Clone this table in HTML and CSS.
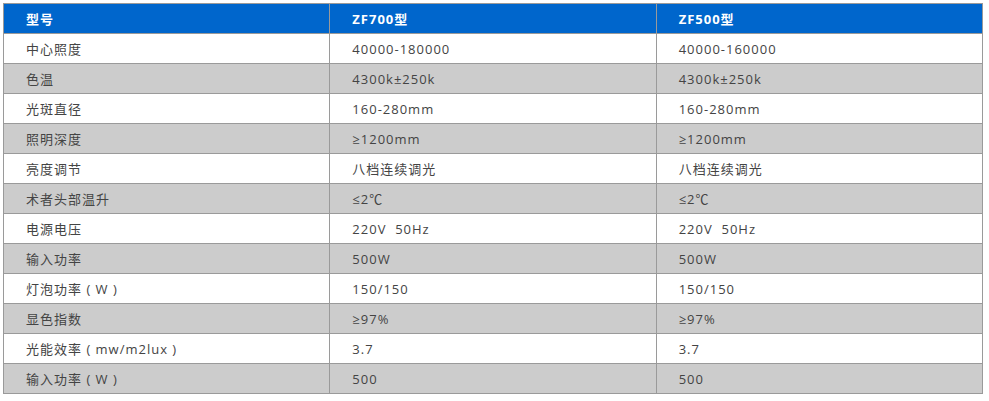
FILE: index.html
```html
<!DOCTYPE html>
<html lang="zh">
<head>
<meta charset="utf-8">
<title>参数</title>
<link rel="stylesheet" href="styles.css">
</head>
<body>
<div class="wrap">
<table class="spec">
  <colgroup><col class="c1"><col class="c2"><col class="c3"></colgroup>
  <thead>
    <tr><th>型号</th><th>ZF700型</th><th>ZF500型</th></tr>
  </thead>
  <tbody>
    <tr><td>中心照度</td><td>40000-180000</td><td>40000-160000</td></tr>
    <tr><td>色温</td><td>4300k±250k</td><td>4300k±250k</td></tr>
    <tr><td>光斑直径</td><td>160-280mm</td><td>160-280mm</td></tr>
    <tr><td>照明深度</td><td>≥1200mm</td><td>≥1200mm</td></tr>
    <tr><td>亮度调节</td><td>八档连续调光</td><td>八档连续调光</td></tr>
    <tr><td>术者头部温升</td><td>≤2℃</td><td>≤2℃</td></tr>
    <tr><td>电源电压</td><td>220V&nbsp;&nbsp;50Hz</td><td>220V&nbsp;&nbsp;50Hz</td></tr>
    <tr><td>输入功率</td><td>500W</td><td>500W</td></tr>
    <tr><td>灯泡功率 ( W )</td><td>150/150</td><td>150/150</td></tr>
    <tr><td>显色指数</td><td>≥97%</td><td>≥97%</td></tr>
    <tr><td>光能效率 ( mw/m2lux )</td><td>3.7</td><td>3.7</td></tr>
    <tr><td>输入功率 ( W )</td><td>500</td><td>500</td></tr>
  </tbody>
</table>
</div>
</body>
</html>
```
FILE: styles.css
```css
html, body {
  margin: 0;
  padding: 0;
  background: #ffffff;
}
.wrap {
  padding: 3px;
}
.spec {
  border-collapse: collapse;
  width: 980px;
  table-layout: fixed;
  font-family: "Open Sans", "Noto Sans CJK SC", sans-serif;
  font-size: 13px;
  letter-spacing: 1px;
  color: #444444;
}
.spec th, .spec td {
  border: 1px solid #9a9a9a;
  height: 29px;
  padding: 0 0 0 22px;
  text-align: left;
  vertical-align: middle;
  line-height: 18px;
  white-space: nowrap;
}
.spec th {
  background: #0066cc;
  color: #ffffff;
  font-weight: bold;
}
.spec tbody tr:nth-child(even) td {
  background: #cccccc;
}
.spec tbody tr:nth-child(odd) td {
  background: #ffffff;
}
```
